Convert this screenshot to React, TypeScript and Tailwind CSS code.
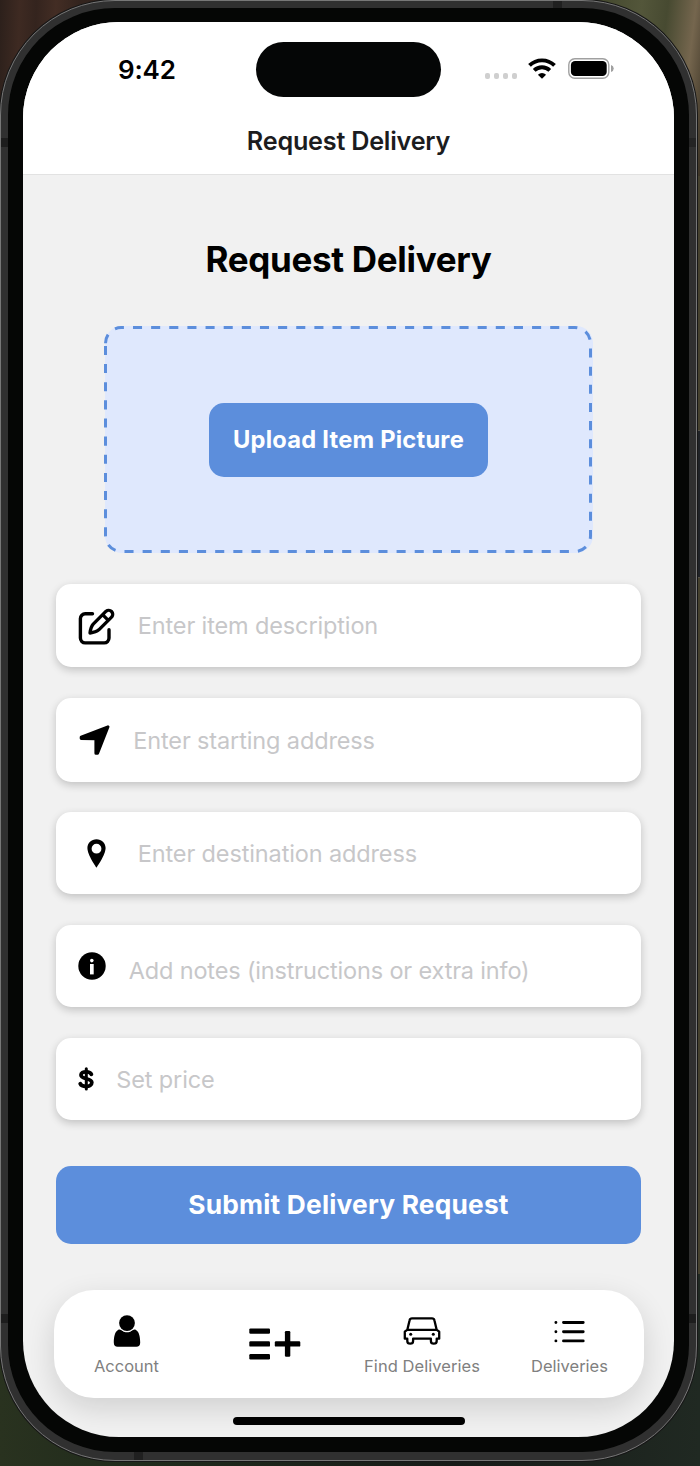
import type { ReactNode } from "react";

function EditIcon() {
  return (
    <svg width="38" height="38" viewBox="0 0 38 38" fill="none" stroke="#000" strokeWidth="3.400" strokeLinecap="round" strokeLinejoin="round">
      <path d="M14.500 5.800H7.200a4.800 4.800 0 0 0-4.800 4.800v19.500a4.800 4.800 0 0 0 4.800 4.800h19a4.800 4.800 0 0 0 4.800-4.800V21.800" />
      <path d="M28.100 3.200 15.200 16.200C13.600 18 12.500 21 12 25c4-.5 7-1.600 8.800-3.200L33.800 8.900A4.050 4.050 0 0 0 28.100 3.200ZM24.600 6.700l5.700 5.700" strokeWidth="3.300" />
    </svg>
  );
}

function ArrowIcon() {
  return (
    <svg width="32" height="32" viewBox="0 0 32 32" stroke="#000" strokeWidth="3" strokeLinejoin="round">
      <path d="M29 1.800 2.200 12.200V13.400L16.900 13.800V28.200H18.600Z" />
    </svg>
  );
}

function PinIcon() {
  return (
    <svg width="19" height="29" viewBox="0 0 19 29">
      <path fillRule="evenodd" d="M9.500.3C4.400.3.400 4.200.400 9.100.400 16 9.500 28.800 9.500 28.800S18.600 16 18.600 9.100C18.600 4.200 14.600.3 9.500.3Zm0 14.300a4.900 4.900 0 1 1 0-9.800 4.900 4.900 0 0 1 0 9.800Z" />
    </svg>
  );
}

function InfoIcon() {
  return (
    <svg width="28" height="28" viewBox="0 0 28 28">
      <circle cx="14" cy="14" r="13.700" />
      <circle cx="13.800" cy="8.600" r="1.800" fill="#fff" />
      <path d="M12 12h3.700v10.400h-3.700z" fill="#fff" />
    </svg>
  );
}

function DollarIcon() {
  return (
    <svg width="16" height="24" viewBox="0 0 16 24" fill="none" stroke="#000" strokeLinecap="round">
      <path strokeWidth="3.800" d="M13.300 7.200C12.500 5.200 10.600 4.800 8.200 4.800 5 4.800 3 6.100 3 8.100c0 4.800 10.800 2.500 10.800 7.400 0 2.500-2.500 3.900-5.600 3.900-3 0-5.200-.8-5.900-2.600" />
      <path strokeWidth="3" d="M8.300 1.800V22" />
    </svg>
  );
}

function AccountIcon() {
  return (
    <svg width="28" height="34" viewBox="0 0 28 34">
      <path d="M5 14.900C7.400 14 8.500 15.400 11 16.700c2 .8 4 .8 6 0 2.500-1.300 3.600-2.700 6-1.800 3.400 1.900 4.200 8 4.200 12.600 0 2.900-1.400 4.200-3.800 4.200H4.600C2.200 31.700.8 30.400.8 27.500.8 22.900 1.600 16.800 5 14.900Z" />
      <circle cx="14" cy="8.100" r="8.900" fill="#fff" />
      <circle cx="14" cy="8.100" r="7.900" />
    </svg>
  );
}

function CreateIcon() {
  return (
    <svg width="52" height="32" viewBox="0 0 52 32">
      <rect x=".3" y=".4" width="20.700" height="5.400" rx="1.200" />
      <rect x=".3" y="13.200" width="20.700" height="5.400" rx="1.200" />
      <rect x=".3" y="26" width="20.700" height="5.400" rx="1.200" />
      <rect x="25.800" y="13.200" width="25.500" height="5.400" rx="1.200" />
      <rect x="35.900" y="3.100" width="5.400" height="25.700" rx="1.200" />
    </svg>
  );
}

function CarIcon() {
  return (
    <svg width="38" height="28" viewBox="0 0 38 28" fill="none" stroke="#000" strokeWidth="2.300" strokeLinejoin="round">
      <path d="M4.400 12.600 6.600 3.200Q7 1.300 9 1.300h20Q31 1.300 31.400 3.200l2.200 9.400M4.200 12.900h29.600L36.200 14.700V21.700h-2.500v2.200q0 2.700-2.900 2.700t-2.900-2.700V21.700H10.100v2.200q0 2.700-2.900 2.700t-2.900-2.700V21.700H1.800V14.700Z" />
      <circle cx="7.700" cy="17.200" r="1.500" fill="#000" stroke="none" />
      <circle cx="30.300" cy="17.200" r="1.500" fill="#000" stroke="none" />
    </svg>
  );
}

function ListIcon() {
  return (
    <svg width="31" height="24" viewBox="0 0 31 24" stroke="#000" strokeWidth="2.900" strokeLinecap="round">
      <path d="M9.500 2.500H29.200M9.500 11.700H29.200M9.500 20.900H29.200M1.900 2.500h.01M1.900 11.700h.01M1.900 20.900h.01" />
    </svg>
  );
}

function WifiIcon() {
  return (
    <svg width="28" height="21" viewBox="0 0 28 21" fill="none" stroke="#000" strokeWidth="3.900">
      <path d="M1.500 7.400a18 18 0 0 1 25 0" />
      <path d="M6.200 12.400a11.300 11.300 0 0 1 15.600 0" />
      <path d="M14 20.800l-4.100-4.100a6 6 0 0 1 8.200 0Z" fill="#000" stroke="none" />
    </svg>
  );
}

function BatteryIcon() {
  return (
    <svg width="46" height="21" viewBox="0 0 46 21">
      <rect x=".8" y=".8" width="40" height="19.400" rx="6" fill="none" stroke="#a0a0a0" strokeWidth="1.400" />
      <rect x="2.900" y="2.900" width="35.800" height="15.200" rx="4.200" />
      <path d="M43 7q2.700.8 2.700 3.500T43 14Z" fill="#a0a0a0" />
    </svg>
  );
}

type FieldProps = { icon: ReactNode; className: string; children: ReactNode };

function Field({ icon, className, children }: FieldProps) {
  return (
    <div className={`flex w-full items-start rounded-[15px] bg-white text-[23.5px] leading-[30px] tracking-[-0.13px] text-[#c7c7c9] shadow-[0_3px_9px_rgba(0,0,0,0.2)] ${className}`}>
      {icon}
      <span className="whitespace-nowrap">{children}</span>
    </div>
  );
}

function Screen() {
  return (
    <div className="flex h-[1415px] w-[651px] flex-col items-center overflow-hidden rounded-[96px] bg-[#f1f1f1]">
      <header className="h-[153px] w-full shrink-0 border-b border-[#e2e2e2] bg-white">
        <div className="flex pt-5">
          <span className="ml-[95px] mt-[11.500px] w-[137.500px] whitespace-nowrap text-[26px] font-semibold leading-8 tracking-[-0.2px] text-black">9:42</span>
          <div className="h-[55px] w-[185.500px] rounded-full bg-[#050606]" />
          <div className="ml-[43.500px] mt-[31px] flex h-[6px] gap-[3.5px]">
            <i className="size-[5.5px] rounded-[2px] bg-[#cfcfcf]" />
            <i className="size-[5.5px] rounded-[2px] bg-[#cfcfcf]" />
            <i className="size-[5.5px] rounded-[2px] bg-[#cfcfcf]" />
            <i className="size-[5.5px] rounded-[2px] bg-[#cfcfcf]" />
          </div>
          <div className="ml-[10.500px] mt-4 flex gap-[12px]">
            <WifiIcon />
            <BatteryIcon />
          </div>
        </div>
        <h1 className="mt-[27.500px] text-center text-[25.200px] font-semibold leading-8 tracking-[-0.22px] text-[#1c1c1e]">Request Delivery</h1>
      </header>

      <main className="flex w-[585.500px] flex-col items-center">
        <h2 className="mt-[62px] text-[35px] font-bold leading-[44px] tracking-[-0.300px] text-black">Request Delivery</h2>

        <section className="relative mt-[45px] flex h-[227px] w-[488px] items-center justify-center rounded-[17px] bg-[#dfe8fd]">
          <svg className="absolute -left-[.5px] top-0" width="488" height="227" fill="none" stroke="#5c8edc" strokeWidth="3" strokeDasharray="9.070 9.070">
            <path d="M1.500 17.200A15.700 15.700 0 0 1 17.200 1.500H470.800A15.700 15.700 0 0 1 486.500 17.200V209.800A15.700 15.700 0 0 1 470.800 225.500H17.200A15.700 15.700 0 0 1 1.500 209.800Z" />
          </svg>
          <button className="mt-[.5px] h-[74.500px] w-[278.500px] whitespace-nowrap rounded-[15px] bg-[#5c8edc] pt-[1px] text-[23.700px] font-bold tracking-[0.220px] text-white">Upload Item Picture</button>
        </section>

        <div className="mt-[31px] flex w-full flex-col">
          <Field className="h-[83px] pl-[22px] pt-[23.500px]" icon={<span className="w-[60px]"><EditIcon /></span>}>
            <span className="block pt-[3.500px]">Enter item description</span>
          </Field>
          <Field className="mt-[31px] h-[83.500px] pl-[23px] pt-[26.500px]" icon={<span className="w-[54.500px]"><ArrowIcon /></span>}>
            <span className="block pt-[1px]">Enter starting address</span>
          </Field>
          <Field className="mt-[30.500px] h-[82px] pl-[31px] pt-[26.500px]" icon={<span className="w-[51px]"><PinIcon /></span>}>
            Enter destination address
          </Field>
          <Field className="mt-[31px] h-[82px] pl-[22px] pt-[26.800px]" icon={<span className="w-[51px]"><InfoIcon /></span>}>
            <span className="block pt-[4px] tracking-[-0.160px]">Add notes (instructions or extra info)</span>
          </Field>
          <Field className="mt-[31px] h-[81.500px] pl-[22px] pt-[26.500px]" icon={<span className="w-[38.500px] pt-[2px]"><DollarIcon /></span>}>
            Set price
          </Field>
        </div>

        <button className="mt-[46px] h-[78px] w-full whitespace-nowrap rounded-[15px] bg-[#5c8edc] pt-[1px] text-[26.300px] font-bold tracking-[0.200px] text-white">Submit Delivery Request</button>
      </main>

      <nav className="mt-[46.500px] flex h-[108px] w-[590px] shrink-0 rounded-[40px] bg-white text-[16.5px] leading-5 text-[#808080] shadow-[0_10px_30px_rgba(0,0,0,0.14)]">
        <div className="flex w-[146px] flex-col items-center pt-[25px]">
          <div className="h-[40.500px]"><AccountIcon /></div>
          <span>Account</span>
        </div>
        <div className="flex w-[149px] justify-center pl-[1px] pt-[37.500px]">
          <CreateIcon />
        </div>
        <div className="flex w-[147px] flex-col items-center pt-[27px]">
          <div className="h-[38.500px]"><CarIcon /></div>
          <span className="whitespace-nowrap tracking-[0.050px]">Find Deliveries</span>
        </div>
        <div className="flex w-[148px] flex-col items-center pt-[29.500px]">
          <div className="h-[36px]"><ListIcon /></div>
          <span>Deliveries</span>
        </div>
      </nav>
      <div className="mt-[19px] h-[7.500px] w-[232px] shrink-0 rounded-full bg-black" />
    </div>
  );
}

export default function App() {
  return (
    <div className="relative h-[1466px] w-[700px] overflow-hidden bg-[linear-gradient(90deg,#2b2924,#45412e)] font-['Inter','Noto_Sans',sans-serif]">
      <div className="absolute left-0 top-0 h-40 w-40 bg-[linear-gradient(92deg,#2c201b_0%,#3e2a22_12%,#34241e_22%,#432d24_34%,#33241e_48%,#302620_100%)]" />
      <div className="absolute right-0 top-0 h-44 w-36 bg-[linear-gradient(97deg,#343a22_0%,#53563a_52%,#474a31_68%,#75664e_85%,#3b3325_100%)]" />
      <div className="absolute bottom-0 left-0 h-48 w-full bg-[linear-gradient(90deg,#29321f,#202b1c_20%,#171b18_65%,#202922)]" />
      <div className="absolute right-0 top-[430px] h-[148px] w-1 border-y border-[#55524a] bg-[#202327]" />
      <div className="relative h-[1461px] w-[697px] rounded-[115px] border border-[#777] bg-[#303030] p-[7px] pb-[8px] pt-[7px] shadow-[0_0_0_1px_#171717]">
        <i className="absolute left-0 top-[137px] h-[9px] w-2 bg-[#1d1d1d]" />
        <i className="absolute right-0 top-[137px] h-[9px] w-2 bg-[#242424]" />
        <i className="absolute left-0 top-[1313px] h-[9px] w-2 bg-[#1d1d1d]" />
        <i className="absolute right-0 top-[1313px] h-[9px] w-2 bg-[#1d1d1d]" />
        <i className="absolute left-[552px] top-0 h-2 w-[9px] bg-[#202020]" />
        <i className="absolute bottom-0 left-[133px] h-2 w-[9px] bg-[#202020]" />
        <div className="relative h-full w-full rounded-[107px] bg-[#050605] pl-[15px] pt-[14px]">
          <Screen />
        </div>
      </div>
    </div>
  );
}
